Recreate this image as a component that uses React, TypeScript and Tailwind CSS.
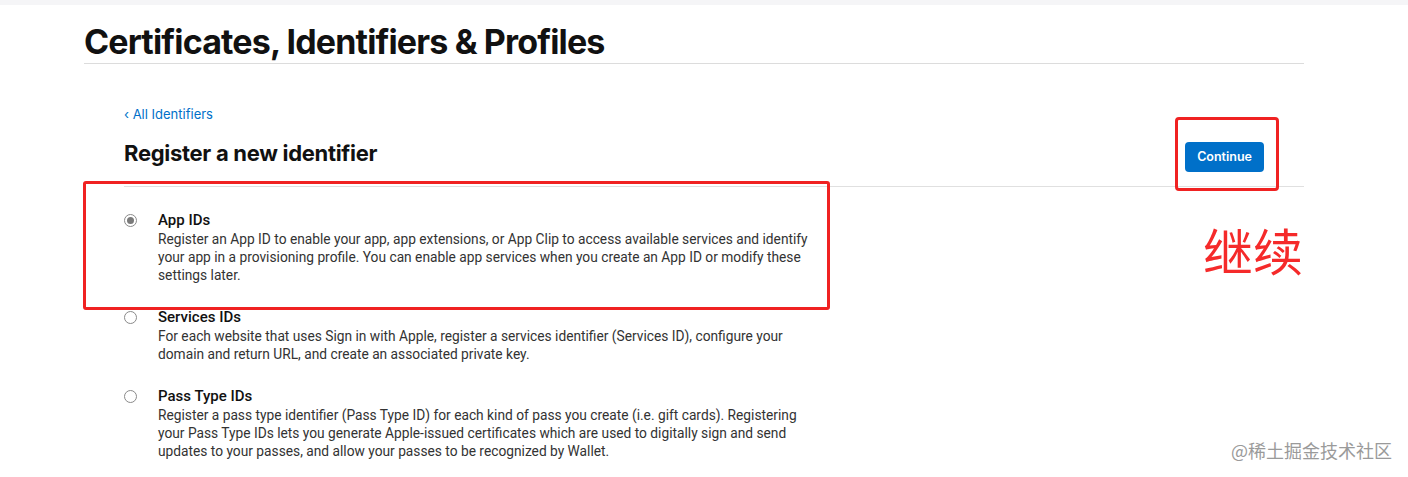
import React from "react";

const options = [
  {
    title: "App IDs",
    desc: "Register an App ID to enable your app, app extensions, or App Clip to access available services and identify your app in a provisioning profile. You can enable app services when you create an App ID or modify these settings later.",
    checked: true,
  },
  {
    title: "Services IDs",
    desc: "For each website that uses Sign in with Apple, register a services identifier (Services ID), configure your domain and return URL, and create an associated private key.",
    checked: false,
  },
  {
    title: "Pass Type IDs",
    desc: "Register a pass type identifier (Pass Type ID) for each kind of pass you create (i.e. gift cards). Registering your Pass Type IDs lets you generate Apple-issued certificates which are used to digitally sign and send updates to your passes, and allow your passes to be recognized by Wallet.",
    checked: false,
  },
];

function Radio({ checked }: { checked: boolean }) {
  return (
    <span className="mt-[3px] flex h-[13px] w-[13px] shrink-0 items-center justify-center rounded-full border border-[#8a8a8a] bg-white">
      {checked && <span className="h-[7px] w-[7px] rounded-full bg-[#7a7a7a]" />}
    </span>
  );
}

export default function App() {
  return (
    <div className="relative h-[477px] w-[1408px] overflow-hidden bg-white font-['Inter',sans-serif] text-[#1d1d1f]">
      <div className="h-[5px] bg-[#f5f5f7]" />
      <div className="ml-[84px] mr-[104px]">
        <h1 className="pt-[17px] text-[34px] leading-[40px] font-bold tracking-[-0.85px] text-[#111]">
          Certificates, Identifiers &amp; Profiles
        </h1>
        <div className="mt-px h-px bg-[#dcdcdc]" />
      </div>

      <div className="ml-[124px] mr-[104px] pt-[37px]">
        <a className="text-[13px] leading-[16px] text-[#0070c9]">‹ All Identifiers</a>
        <div className="mt-[14px] flex h-[28px] items-start justify-between">
          <h2 className="text-[22px] leading-[28px] font-bold tracking-[-0.3px] text-[#111]">Register a new identifier</h2>
          <button className="mt-[3px] mr-[40px] rounded-[4px] bg-[#0070c9] px-[12px] py-[7px] text-[12.5px] leading-[16px] font-semibold text-white">
            Continue
          </button>
        </div>
        <div className="mt-[19px] h-px bg-[#e0e0e0]" />

        <div className="mt-[24px] flex flex-col gap-[24px] font-['Roboto',sans-serif]">
          {options.map((o) => (
            <div key={o.title} className="flex gap-[21px]">
              <Radio checked={o.checked} />
              <div className="w-[652px]">
                <div className="text-[15px] leading-[18px] font-medium text-[#111]">{o.title}</div>
                <p className="mt-px text-[13.75px] leading-[18px] text-[#333]">{o.desc}</p>
              </div>
            </div>
          ))}
        </div>
      </div>

      <div className="absolute left-[83px] top-[181px] h-[129px] w-[747px] rounded-[3px] border-[3px] border-[#f02222]" />
      <div className="absolute left-[1175px] top-[117px] h-[74px] w-[104px] rounded-[4px] border-[3px] border-[#f02222]" />
      <div className="absolute left-[1203px] top-[216px] font-['Noto_Sans_CJK_SC',sans-serif] text-[50px] leading-[66px] text-[#f52a2a]">
        继续
      </div>
      <div className="absolute left-[1231px] top-[437px] font-['Noto_Sans_CJK_SC',sans-serif] text-[18px] leading-[26px] text-[#9a9a9a]">
        @稀土掘金技术社区
      </div>
    </div>
  );
}
